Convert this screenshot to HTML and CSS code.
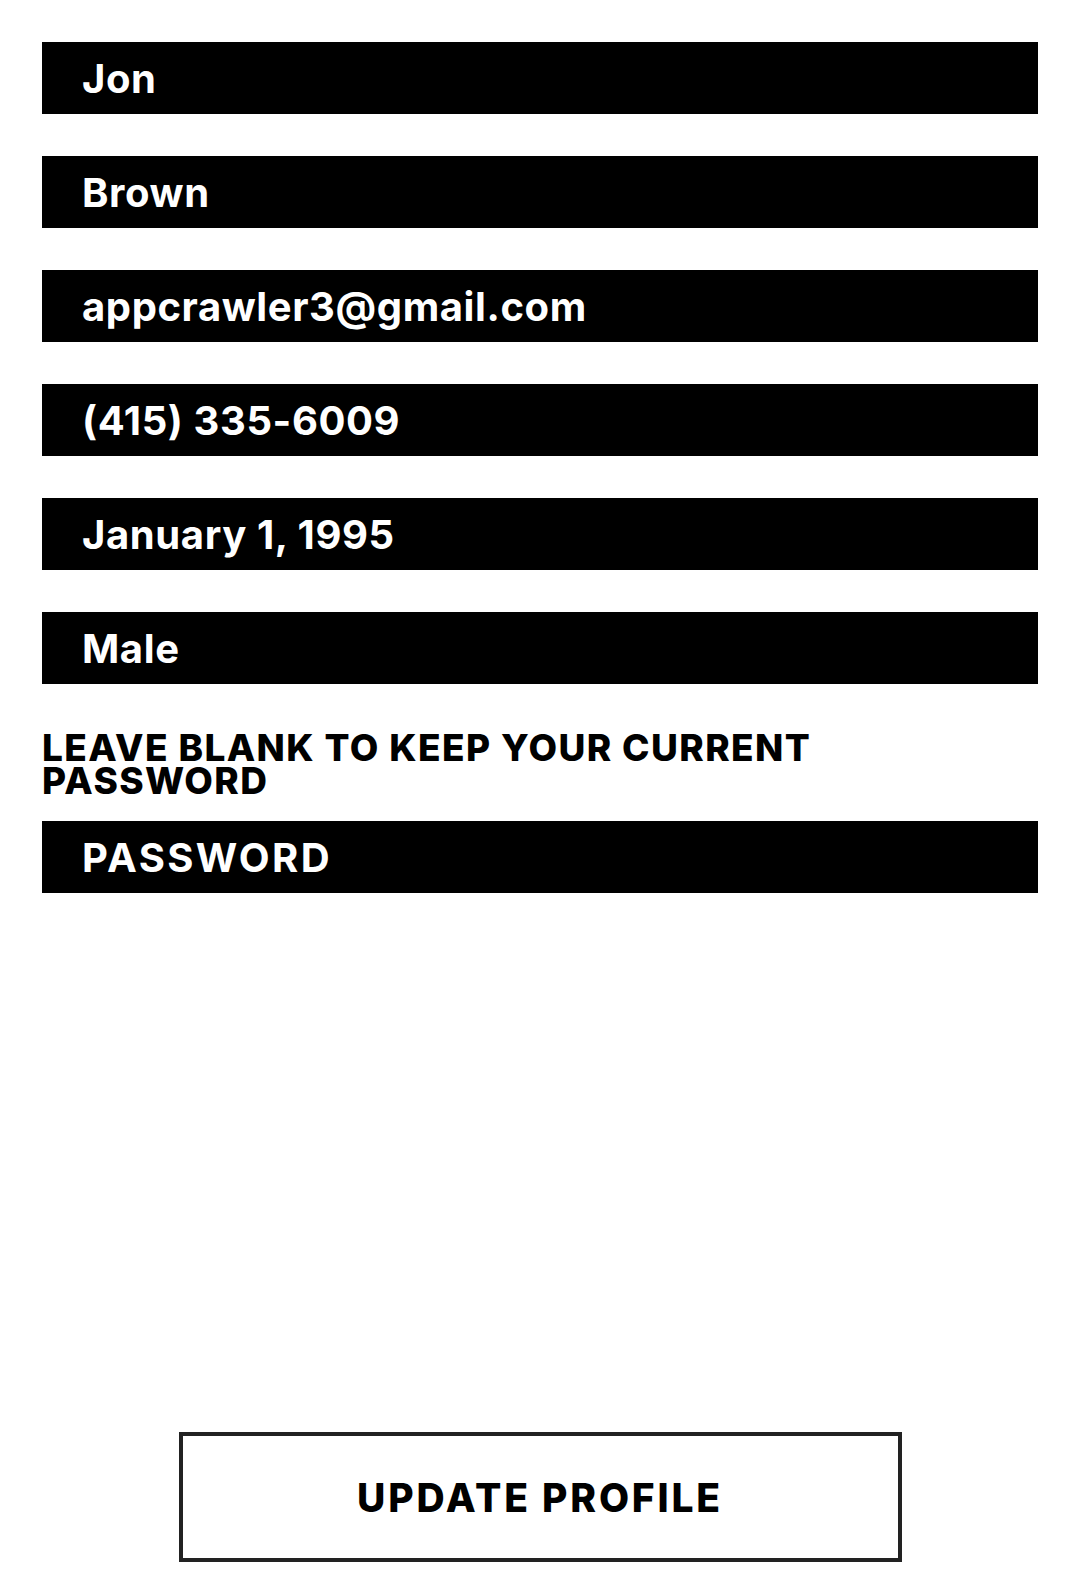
FILE: index.html
```html
<!DOCTYPE html>
<html>
<head>
<meta charset="utf-8">
<link rel="stylesheet" href="styles.css">
</head>
<body>
<main class="page">
  <div class="field">Jon</div>
  <div class="field">Brown</div>
  <div class="field">appcrawler3@gmail.com</div>
  <div class="field">(415) 335-6009</div>
  <div class="field">January 1, 1995</div>
  <div class="field">Male</div>
  <p class="hint">LEAVE BLANK TO KEEP YOUR CURRENT<br>PASSWORD</p>
  <div class="field field-pw">PASSWORD</div>
  <div class="actions">
    <button class="update">UPDATE PROFILE</button>
  </div>
</main>
</body>
</html>
```
FILE: styles.css
```css
* { box-sizing: border-box; }
html, body { margin: 0; padding: 0; background: #fff; }
.page {
  min-height: 1584px;
  padding: 42px 42px 22px 42px;
  display: flex;
  flex-direction: column;
  font-family: Inter, "Liberation Sans", sans-serif;
}
.field {
  height: 72px;
  background: #000;
  color: #fff;
  font-weight: 700;
  font-size: 40px;
  display: flex;
  align-items: center;
  padding-left: 40px;
  margin-bottom: 42px;
  letter-spacing: 0.6px;
}
.hint {
  margin: 5px 0 24px 0;
  font-size: 37px;
  line-height: 33px;
  font-weight: 800;
  letter-spacing: 1.4px;
  color: #000;
}
.field-pw {
  margin-bottom: 0;
  letter-spacing: 2.4px;
}
.actions {
  margin-top: auto;
  display: flex;
  justify-content: center;
}
.update {
  width: 723px;
  height: 130px;
  background: #fff;
  border: 4px solid #222;
  font-family: Inter, "Liberation Sans", sans-serif;
  font-weight: 800;
  font-size: 39px;
  letter-spacing: 2.8px;
  color: #000;
  padding: 0;
}
```
